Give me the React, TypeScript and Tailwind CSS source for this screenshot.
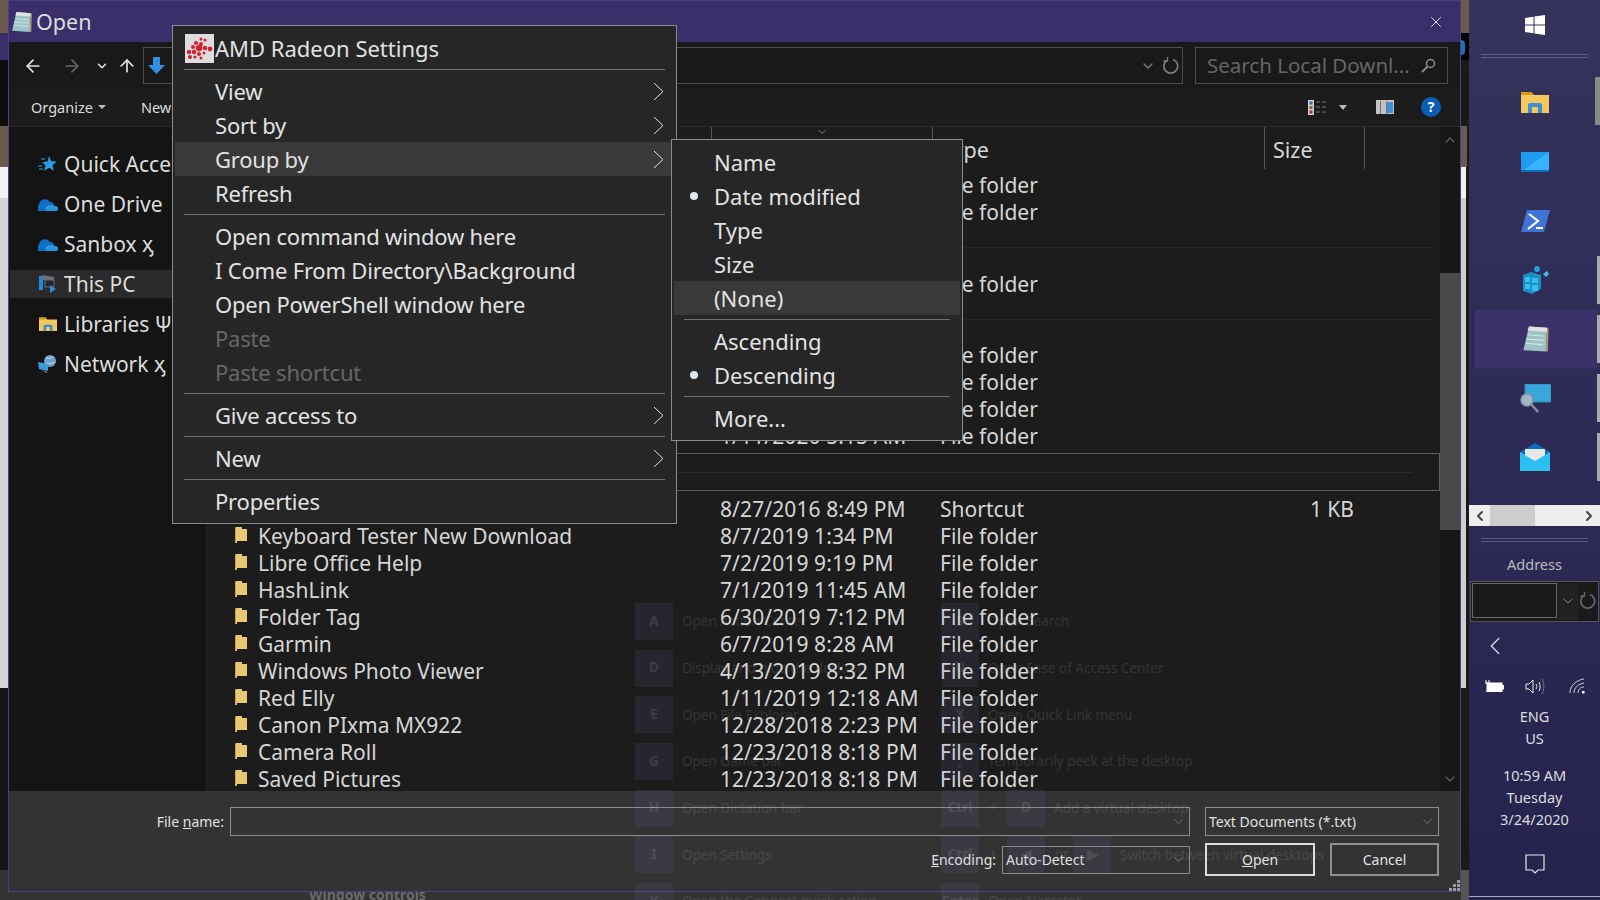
import { ArrowLeft, ArrowRight, ArrowUp, ChevronDown, ChevronLeft, ChevronRight, ChevronUp, X } from "lucide-react";

const FONT = "font-['Noto_Sans','Open_Sans',sans-serif]";

// --- small drawings ---

function AmdIcon() {
  const dots = [[16, 5, 1.5], [20, 6, 1.5], [11, 9, 2], [16, 10, 2], [8, 13, 2], [14, 14, 3.2], [20, 14, 2.2], [25, 15, 2.4], [4, 18, 2.2], [9, 18, 2.2], [14, 20, 2], [19, 19, 1.5], [5, 23, 2], [10, 23, 1.6], [16, 24, 1.6]];
  return (
    <svg width="29" height="29" viewBox="0 0 29 29" className="shrink-0">
      <rect width="29" height="29" fill="#dddddd" />
      {dots.map(([x, y, r], i) => (
        <circle key={i} cx={x} cy={y} r={r} fill="#d8202c" />
      ))}
    </svg>
  );
}

function NotepadIcon({ size = 20 }: { size?: number }) {
  return (
    <svg width={size} height={size} viewBox="0 0 20 20">
      <path d="M5 1l13 1-1 17-16-1z" fill="#9cc3c6" />
      <path d="M5 1l13 1-.4 3L4 4z" fill="#e2e2e2" />
      <path d="M18 2l1 .5-.6 16.500-1.400 0z" fill="#b89b6a" />
      <path d="M4 7l12 1M3 10l13 1M3 13l12 1" stroke="#d7e8e8" strokeWidth=".8" />
    </svg>
  );
}

function ChevronMenu() {
  return (
    <svg width="11" height="19" viewBox="0 0 11 19" fill="none" stroke="#dde6f0" strokeWidth="1">
      <path d="M1 1l9 8.500-9 8.500" />
    </svg>
  );
}

function RefreshGlyph({ size = 18 }: { size?: number }) {
  return (
    <svg width={size} height={size} viewBox="0 0 18 18" fill="none" stroke="currentColor" strokeWidth="1.800">
      <path d="M11 2.500A7 7 0 1 1 5 3.200" />
      <path d="M5.500 0v4H1.500" strokeWidth="1.300" />
    </svg>
  );
}

function StarIcon() {
  return (
    <svg width="19" height="18" viewBox="0 0 19 18">
      <path d="M11 1l2.200 5.200 5.600.4-4.300 3.600 1.400 5.500L11 12.800l-4.800 2.900 1.400-5.500-3.600-3 5.600-.6z" fill="#2b9de8" />
      <path d="M0 11h4M1 14h4M3 4h4" stroke="#2b9de8" strokeWidth="1" />
    </svg>
  );
}

function CloudIcon() {
  return (
    <svg width="20" height="13" viewBox="0 0 20 13">
      <path d="M1 13a3 3 0 0 1 0-6 6 6 0 0 1 11-3 4 4 0 0 1 4 4 3 3 0 0 1 3 5z" fill="#0f6fc6" />
      <path d="M8 13a3 3 0 0 1 2-5 4 4 0 0 1 6 0 3 3 0 0 1 3 5z" fill="#2a95dd" />
    </svg>
  );
}

function PcIcon() {
  return (
    <svg width="19" height="18" viewBox="0 0 19 18">
      <path d="M1 1h4v14H1z" fill="#1b8ae0" />
      <path d="M4 0l12 2v3H4z" fill="#6a6f78" />
      <path d="M7 5h9v7H7z" fill="#22262c" stroke="#6a6f78" />
      <path d="M12 10l6 4-6 4z" fill="#2b8be0" />
    </svg>
  );
}

function FolderColor({ w = 18, h = 16 }: { w?: number; h?: number }) {
  return (
    <svg width={w} height={h} viewBox="0 0 28 24">
      <path d="M0 2h10l3 3h15v18H0z" fill="#f4c95c" />
      <path d="M0 2h10l3 3H0z" fill="#d79a1c" />
      <path d="M7 23v-8a2 2 0 0 1 2-2h10a2 2 0 0 1 2 2v8h-4v-6h-6v6z" fill="#3c8fd6" />
      <path d="M11 17h6v4h-6z" fill="#f4c95c" />
    </svg>
  );
}

function NetworkIcon() {
  return (
    <svg width="19" height="18" viewBox="0 0 19 18">
      <circle cx="12" cy="6" r="6" fill="#6d9fc9" />
      <path d="M8 3c3 1 5 0 7-1M7 8c3 1 6 1 10-1" stroke="#c7dbe9" strokeWidth="1" fill="none" />
      <path d="M0 7l10 2v7L1 14z" fill="#3a9bdc" />
      <path d="M3 15l6 3v-1z" fill="#b8c4cc" />
    </svg>
  );
}

function ListFolder() {
  return (
    <svg width="12" height="16" viewBox="0 0 12 16" className="shrink-0 mt-[-4px]">
      <path d="M1 0h6v2h5v12H2v2H0V1z" fill="#e9c873" />
      <path d="M0 1h1v15H0z" fill="#c9a24c" />
    </svg>
  );
}

function WinLogo() {
  return (
    <svg width="20" height="20" viewBox="0 0 20 20">
      <path d="M0 3l8.500-1.200v7.600H0zM9.500 1.600L20 0v9.400H9.500zM0 10.500h8.500v7.700L0 17zM9.500 10.500H20V20L9.500 18.400z" fill="#fff" />
    </svg>
  );
}

function DesktopIcon() {
  return (
    <svg width="28" height="20" viewBox="0 0 28 20">
      <rect width="28" height="20" fill="#1f9cf0" />
      <path d="M0 20L28 0v20z" fill="#39b3ff" />
      <rect y="18" width="28" height="2" fill="#0a6fb8" />
    </svg>
  );
}

function PsIcon() {
  return (
    <svg width="29" height="22" viewBox="0 0 29 22">
      <path d="M6 0h23l-6 22H0z" fill="#3f74d6" />
      <path d="M8 4l9 7-10 8" stroke="#fff" strokeWidth="2.200" fill="none" />
      <path d="M15 18h7" stroke="#fff" strokeWidth="2" />
    </svg>
  );
}

function RegistryIcon() {
  return (
    <svg width="27" height="28" viewBox="0 0 27 28">
      <path d="M1 9l8-3 10 3v14l-9 5-9-3z" fill="#1c8fc6" />
      <path d="M3 11h5v5H3zM10 12h6v5h-6zM3 18h5v5H3zM10 19h6v6h-6z" fill="#36c2ee" />
      <circle cx="15" cy="3" r="3" fill="#1fa0d8" />
      <path d="M21 8l4-3 2 3-3 3z" fill="#3bc0ee" />
    </svg>
  );
}

function MagnifierIcon() {
  return (
    <svg width="31" height="29" viewBox="0 0 31 29">
      <rect x="5" y="0" width="26" height="18" fill="#3ba6dc" stroke="#2c86b8" />
      <circle cx="7" cy="16" r="6" fill="#9fb6cc" stroke="#8895a3" strokeWidth="1.500" />
      <path d="M11 20l7 8" stroke="#8a8f95" strokeWidth="2.500" />
    </svg>
  );
}

function MailIcon() {
  return (
    <svg width="30" height="28" viewBox="0 0 30 28">
      <path d="M0 9L15 0l15 9v19H0z" fill="#0f6cbd" />
      <path d="M5 6h20v10l-10 5-10-5z" fill="#e8e8e8" />
      <path d="M0 9l15 9 15-9v19H0z" fill="#2cc0f2" />
    </svg>
  );
}

function ViewIcon() {
  return (
    <svg width="19" height="15" viewBox="0 0 19 15">
      <rect width="6" height="15" fill="#cfcfcf" />
      <rect x="1.500" y="1.500" width="3" height="3" fill="#2a6fb0" />
      <rect x="1.500" y="6" width="3" height="3" fill="#8a6a3a" />
      <rect x="1.500" y="10.500" width="3" height="3" fill="#b02a2a" />
      <path d="M8 2h4M14 2h4M8 7h4M14 7h4M8 12h4M14 12h4" stroke="#777" />
    </svg>
  );
}

function PaneIcon() {
  return (
    <svg width="18" height="14" viewBox="0 0 18 14">
      <rect width="18" height="14" fill="#c4c4c4" />
      <rect x="11" y="2" width="6" height="11" fill="#3f8fd6" />
      <rect x="4" y="1" width="1" height="13" fill="#777" />
      <rect x="10" y="1" width="1" height="13" fill="#777" />
    </svg>
  );
}

function Grip() {
  return (
    <svg width="11" height="11" viewBox="0 0 11 11">
      <path d="M8 0h3v3H8zM4 4h3v3H4zM8 4h3v3H8zM0 8h3v3H0zM4 8h3v3H4zM8 8h3v3H8z" fill="#9a9a9a" />
    </svg>
  );
}

// --- context menus ---

function MenuSep() {
  return <div className="h-px bg-[#6f6f6f] mx-[9px] my-[4px]" />;
}

function MenuRow({ label, arrow, active, disabled }: { label: string; arrow?: boolean; active?: boolean; disabled?: boolean }) {
  return (
    <div className={`h-[34px] flex items-center pl-[40px] pr-[10px] justify-between text-[22px] tracking-[-0.2px] leading-none ${active ? "bg-[#393939]" : ""} ${disabled ? "text-[#666666]" : "text-[#e2e2e2]"}`}>
      <span>{label}</span>
      {arrow && <ChevronMenu />}
    </div>
  );
}

function SubRow({ label, bullet, active }: { label: string; bullet?: boolean; active?: boolean }) {
  return (
    <div className={`h-[34px] flex items-center text-[22px] leading-none text-[#e2e2e2] ${active ? "bg-[#393939]" : ""}`}>
      <div className="w-[40px] flex justify-end pr-[16px]">
        {bullet && <div className="w-2 h-2 rounded-full bg-[#dde8f2]" />}
      </div>
      <span>{label}</span>
    </div>
  );
}

function ContextMenu() {
  return (
    <div className="absolute z-20 left-[172px] top-[25px] w-[505px] h-[499px] bg-[#262626] border border-[#8c8c8c] px-[2px] pt-[7px]">
      <div className="h-[30px] flex items-center gap-px pl-[10px] text-[22px] leading-none text-[#e2e2e2]">
        <AmdIcon />
        <span>AMD Radeon Settings</span>
      </div>
      <div className="h-px bg-[#6f6f6f] mx-[9px] mt-[6px] mb-[4px]" />
      <MenuRow label="View" arrow />
      <MenuRow label="Sort by" arrow />
      <MenuRow label="Group by" arrow active />
      <MenuRow label="Refresh" />
      <MenuSep />
      <MenuRow label="Open command window here" />
      <MenuRow label="I Come From Directory\Background" />
      <MenuRow label="Open PowerShell window here" />
      <MenuRow label="Paste" disabled />
      <MenuRow label="Paste shortcut" disabled />
      <MenuSep />
      <MenuRow label="Give access to" arrow />
      <MenuSep />
      <MenuRow label="New" arrow />
      <MenuSep />
      <MenuRow label="Properties" />
    </div>
  );
}

function GroupSubmenu() {
  return (
    <div className="absolute z-30 left-[671px] top-[139px] w-[292px] h-[302px] bg-[#262626] border border-[#8c8c8c] px-[2px] pt-[5px]">
      <SubRow label="Name" />
      <SubRow label="Date modified" bullet />
      <SubRow label="Type" />
      <SubRow label="Size" />
      <SubRow label="(None)" active />
      <div className="h-px bg-[#6f6f6f] mx-[10px] my-[4px]" />
      <SubRow label="Ascending" />
      <SubRow label="Descending" bullet />
      <div className="h-px bg-[#6f6f6f] mx-[10px] my-[4px]" />
      <SubRow label="More..." />
    </div>
  );
}

// --- file dialog ---

const NAV = [
  { icon: <StarIcon />, label: "Quick Access" },
  { icon: <CloudIcon />, label: "One Drive" },
  { icon: <CloudIcon />, label: "Sanbox ӽ" },
  { icon: <PcIcon />, label: "This PC", active: true },
  { icon: <FolderColor />, label: "Libraries Ψ" },
  { icon: <NetworkIcon />, label: "Network ӽ" },
];

const FILES = [
  ["Keyboard Tester New Download", "8/7/2019 1:34 PM"],
  ["Libre Office Help", "7/2/2019 9:19 PM"],
  ["HashLink", "7/1/2019 11:45 AM"],
  ["Folder Tag", "6/30/2019 7:12 PM"],
  ["Garmin", "6/7/2019 8:28 AM"],
  ["Windows Photo Viewer", "4/13/2019 8:32 PM"],
  ["Red Elly", "1/11/2019 12:18 AM"],
  ["Canon PIxma MX922", "12/28/2018 2:23 PM"],
  ["Camera Roll", "12/23/2018 8:18 PM"],
  ["Saved Pictures", "12/23/2018 8:18 PM"],
];

function FileRow({ name, date, type = "File folder", size }: { name?: string; date?: string; type?: string; size?: string }) {
  return (
    <div className="h-[27px] grid grid-cols-[513px_220px_324px_90px] items-center text-[21px] leading-none text-[#d6d6d6] whitespace-nowrap">
      <div className="flex items-center gap-[11px] pl-[28px]">
        {name && <ListFolder />}
        <span>{name}</span>
      </div>
      <div className="tracking-[0.1px]">{date}</div>
      <div>{type}</div>
      <div className="text-right">{size}</div>
    </div>
  );
}

function FileDialog() {
  return (
    <div className="absolute left-[8px] top-0 w-[1453px] h-[892px] flex flex-col border-x border-b border-[#4a3f88] z-10">
      {/* title bar */}
      <div className="h-[42px] shrink-0 bg-[#3a2f6b] border-t border-[#4b4080] flex items-center pl-[2px] pr-[15px] gap-[3px] text-[21.500px] leading-none text-[#dcdcdc]">
        <NotepadIcon size={22} />
        <span>Open</span>
        <X size={18} strokeWidth={1.200} className="ml-auto text-[#e8e8e8]" />
      </div>

      {/* address row */}
      <div className="h-[46px] shrink-0 bg-[#191919] flex items-center pt-px">
        <div className="w-[134px] pl-[14px] flex items-center text-[#e6e6e6]">
          <ArrowLeft size={20} strokeWidth={2} />
          <ArrowRight size={20} strokeWidth={2} className="ml-[19px] text-[#666666]" />
          <ChevronDown size={14} strokeWidth={2.500} className="ml-[13px]" />
          <ArrowUp size={20} strokeWidth={2} className="ml-[8px]" />
        </div>
        <div className="w-[1040px] h-[37px] border border-[#4d4d4d] flex items-center justify-between pl-[4px] pr-[2px]">
          <svg width="17" height="17" viewBox="0 0 17 17">
            <path d="M5 0h7v8h5l-8.500 9L0 8h5z" fill="#2f8fe0" />
          </svg>
          <div className="flex items-center gap-[6px] text-[#7a7a7a]">
            <ChevronDown size={16} strokeWidth={2} />
            <RefreshGlyph />
          </div>
        </div>
        <div className="ml-[12px] w-[253px] h-[37px] border border-[#4d4d4d] flex items-center justify-between pl-[11px] pr-[11px] text-[20.500px] leading-none text-[#666666]">
          <span>Search Local Downl...</span>
          <svg width="15" height="15" viewBox="0 0 15 15" fill="none" stroke="#8a8a8a" strokeWidth="1.500">
            <circle cx="9.500" cy="5.500" r="4" />
            <path d="M6.500 8.500L1 14" strokeWidth="2" />
          </svg>
        </div>
      </div>

      {/* toolbar */}
      <div className="h-[39px] shrink-0 bg-[#1c1c1c] border-b border-[#2b2b2b] flex items-center pl-[22px] pr-[19px] text-[14.500px] leading-none text-[#dddddd]">
        <span>Organize</span>
        <span className="ml-[5px] border-x-[4px] border-x-transparent border-t-[4px] border-t-[#bbbbbb]" />
        <span className="ml-[35px]">New folder</span>
        <div className="ml-auto flex items-center">
          <ViewIcon />
          <span className="ml-[12px] border-x-[4px] border-x-transparent border-t-[5px] border-t-[#bbbbbb]" />
          <div className="ml-[29px]"><PaneIcon /></div>
          <div className="ml-[27px] w-5 h-5 rounded-full bg-[#0a5cb4] flex items-center justify-center text-[14px] font-bold text-white">?</div>
        </div>
      </div>

      {/* body */}
      <div className="flex-1 min-h-0 flex">
        <div className="w-[198px] shrink-0 bg-[#141414] border-r border-[#242424] pt-[17px] pl-px">
          {NAV.map((n) => (
            <div key={n.label} className="h-[40px] flex items-center">
              <div className={`w-full h-[28px] flex items-center whitespace-nowrap text-[21px] leading-none text-[#dcdcdc] ${n.active ? "bg-[#2a2a2a]" : ""}`}>
                <div className="w-[30px] ml-[18px] flex justify-center shrink-0 pl-[9px]">{n.icon}</div>
                <span className="ml-[6px]">{n.label}</span>
              </div>
            </div>
          ))}
        </div>

        <div className="flex-1 min-w-0 bg-[#1c1c1c] overflow-hidden">
          <div className="h-[42px] grid grid-cols-[504px_221px_332px_100px_1fr] text-[21.500px] leading-none text-[#d6d6d6]">
            <div />
            <div className="border-l border-[#555555] relative">
              <ChevronDown size={12} className="absolute left-[104px] top-[-1px] text-[#888888]" />
            </div>
            <div className="border-l border-[#555555] pl-[8px] pt-[12px]">Type</div>
            <div className="border-l border-[#555555] pl-[8px] pt-[12px]">Size</div>
            <div className="border-l border-[#555555]" />
          </div>
          <div className="pt-[3px]">
            <FileRow />
            <FileRow />
            <div className="h-px bg-[#262626] mt-[21px] mb-[23px] mr-[8px]" />
            <FileRow />
            <div className="h-px bg-[#262626] mt-[21px] mb-[22px] mr-[8px]" />
            <FileRow />
            <FileRow />
            <FileRow />
            <FileRow date="1/11/2020 5:15 AM" />
            <div className="h-[38px] mt-[3px] mb-[5px] border border-[#5c5c5c] flex items-center">
              <div className="h-px bg-[#2a2a2a] w-full mr-[26px]" />
            </div>
            <FileRow date="8/27/2016 8:49 PM" type="Shortcut" size="1 KB" />
            {FILES.map(([name, date]) => (
              <FileRow key={name} name={name} date={date} />
            ))}
          </div>
        </div>

        <div className="w-[20px] shrink-0 bg-[#171717] flex flex-col items-center text-[#5f5f5f] pt-[5px] relative">
          <ChevronUp size={16} strokeWidth={2} />
          <div className="w-full h-[257px] bg-[#4a4a4a] mt-[125px] mb-auto" />
          <ChevronDown size={16} strokeWidth={2} className="mb-[4px]" />
        </div>
      </div>

      {/* footer */}
      <div className="h-[100px] shrink-0 bg-[#333333] pt-[16px] pr-[21px] text-[14px] leading-none text-[#e2e2e2] relative">
        <div className="flex items-center h-[29px]">
          <div className="w-[215px] text-right">File <u>n</u>ame:</div>
          <div className="ml-[6px] flex-1 h-full border border-[#8c8c8c] flex items-center justify-end pr-[3px] text-[#999999]">
            <ChevronDown size={15} strokeWidth={1} />
          </div>
          <div className="ml-[15px] w-[234px] h-full border border-[#8c8c8c] flex items-center justify-between pl-[3px] pr-[3px]">
            <span>Text Documents (*.txt)</span>
            <ChevronDown size={15} strokeWidth={1} className="text-[#999999]" />
          </div>
        </div>
        <div className="flex items-center justify-end mt-[7px] h-[33px]">
          <span><u>E</u>ncoding:</span>
          <div className="ml-[6px] w-[188px] h-[28px] border border-[#8c8c8c] flex items-center justify-between pl-[3px] pr-[3px]">
            <span>Auto-Detect</span>
            <ChevronDown size={15} strokeWidth={1} className="text-[#999999]" />
          </div>
          <div className="ml-[15px] w-[110px] h-full border-2 border-[#dcdcdc] flex items-center justify-center"><span><u>O</u>pen</span></div>
          <div className="ml-[15px] w-[109px] h-full border-2 border-[#8f8f8f] flex items-center justify-center">Cancel</div>
        </div>
        <div className="absolute right-0 bottom-0"><Grip /></div>
      </div>
    </div>
  );
}

// --- faint page showing through the dialog ---

const GHOST = [
  [["A"], "Open Action Center", ["S"], "Open Search"],
  [["D"], "Display and hide the desktop", ["U"], "Open Ease of Access Center"],
  [["E"], "Open File Explorer", ["X"], "Open Quick Link menu"],
  [["G"], "Open Game bar", [","], "Temporarily peek at the desktop"],
  [["H"], "Open Dictation bar", ["Ctrl", "+", "D"], "Add a virtual desktop"],
  [["I"], "Open Settings", ["Ctrl", "+", "◀", "or", "▶"], "Switch between virtual desktops"],
  [["K"], "Open the Connect quick action", ["Enter"], "Open Narrator"],
] as const;

function GhostKeys({ keys }: { keys: readonly string[] }) {
  return (
    <div className="flex items-center gap-[10px] shrink-0">
      {keys.map((k, i) =>
        k === "+" || k === "or" ? (
          <span key={i} className="w-[8px] text-center">{k}</span>
        ) : (
          <div key={i} className="w-[38px] h-[37px] bg-[#8a80d0]/10 flex items-center justify-center font-bold">{k}</div>
        ),
      )}
    </div>
  );
}

function GhostPage() {
  return (
    <div className="absolute z-[15] left-[635px] top-[603px] w-[700px] grid grid-cols-[306px_1fr] gap-y-[9.670px] text-[13.500px] leading-none text-white/10 whitespace-nowrap pointer-events-none">
      {GHOST.map(([k1, t1, k2, t2]) => (
        <div key={t1} className="contents">
          <div className="flex items-center gap-[9px]">
            <GhostKeys keys={k1} />
            <span className="pt-px">{t1}</span>
          </div>
          <div className="flex items-center gap-[9px]">
            <GhostKeys keys={k2} />
            <span className="pt-px">{t2}</span>
          </div>
        </div>
      ))}
    </div>
  );
}

// --- side taskbar ---

function DoubleLine() {
  return (
    <div className="mx-[12px] h-[4px] border-y border-[#5b5985]" />
  );
}

function TaskIcon({ children, active, tab }: { children: React.ReactNode; active?: boolean; tab?: string }) {
  return (
    <div className="h-[58px] flex items-center relative mb-px">
      <div className="w-full h-full pr-[3px] pl-[4px]">
        <div className={`h-full flex items-center justify-center ${active ? "bg-[#3a3268] border-l border-[#25224a]" : ""}`}>{children}</div>
      </div>
      {tab && <div className={`absolute right-0 top-[5px] bottom-[5px] ${tab}`} />}
    </div>
  );
}

function Taskbar() {
  return (
    <div className="w-[131px] h-[900px] shrink-0 bg-gradient-to-b from-[#35335c] to-[#25234e] flex flex-col text-[14.500px] leading-none text-[#dddddd] relative z-10">
      <div className="h-[54px] flex items-center justify-center pb-[5px]"><WinLogo /></div>
      <DoubleLine />
      <div className="pt-[16px] relative">
        <div className="absolute right-0 top-[19px] w-[5px] h-[48px] bg-[#8a8a8a]" />
        <TaskIcon><div className="mb-[3px]"><FolderColor w={28} h={24} /></div></TaskIcon>
        <TaskIcon><DesktopIcon /></TaskIcon>
        <TaskIcon><PsIcon /></TaskIcon>
        <TaskIcon tab="w-[3px] bg-[#aaaaaa]"><RegistryIcon /></TaskIcon>
        <TaskIcon active tab="w-[3px] bg-[#aaaaaa]"><NotepadIcon size={28} /></TaskIcon>
        <TaskIcon tab="w-[3px] bg-[#aaaaaa]"><MagnifierIcon /></TaskIcon>
        <TaskIcon tab="w-[3px] bg-[#aaaaaa]"><MailIcon /></TaskIcon>
      </div>

      <div className="h-[21px] mt-[18px] bg-[#eeeeee] flex items-center justify-between px-[3px] text-[#444444] relative">
        <ChevronLeft size={16} strokeWidth={3} />
        <div className="absolute left-[21px] w-[45px] h-[21px] bg-[#cdcdcd]" />
        <ChevronRight size={16} strokeWidth={3} />
      </div>
      <div className="mt-[12px]"><DoubleLine /></div>
      <div className="mt-[15px] text-center text-[#bbbbbb]">Address</div>
      <div className="mt-[9px] mx-px h-[41px] bg-[#1a1a1a] border border-[#555555] flex items-start p-px">
        <div className="w-[85px] h-[35px] border border-[#666666]" />
        <div className="w-[21px] h-[37px] bg-[#222222] flex items-center justify-center text-[#999999]">
          <ChevronDown size={16} strokeWidth={1.200} />
        </div>
        <div className="flex-1 h-[37px] flex items-center justify-center text-[#666666]">
          <RefreshGlyph />
        </div>
      </div>

      <div className="mt-[9px] pl-[11px] text-[#dddddd]"><ChevronLeft size={30} strokeWidth={1} /></div>
      <div className="mt-[17px] flex items-center justify-between pl-[15px] pr-[14px]">
        <svg width="20" height="13" viewBox="0 0 20 13" fill="none" stroke="#ffffff">
          <path d="M2 0v3M5 0v3M1 3h5v2.500H4.500V11H2" />
          <rect x="3" y="3" width="15" height="8.500" fill="#ffffff" />
          <rect x="18.500" y="5.500" width="1" height="3.500" />
        </svg>
        <svg className="mr-[4px]" width="20" height="17" viewBox="0 0 20 17" fill="none" stroke="#e8e8e8">
          <path d="M1 6h3l4-4v13l-4-4H1z" />
          <path d="M11 6c1 1.500 1 3.500 0 5M14 4c1.500 3 1.500 6 0 9" />
          <path d="M17 1c2.500 5 2.500 10 0 15" stroke="#77759a" />
        </svg>
        <svg width="17" height="16" viewBox="0 0 17 16" fill="none" stroke="#cfcfcf">
          <path d="M1 15C1 8 7 2 15 1M5 15c0-5 4-9 10-10M9 15c0-3 2-6 6-6" />
          <rect x="13" y="13" width="2.500" height="2.500" fill="#fff" stroke="none" />
        </svg>
      </div>
      <div className="mt-[11px] h-[22px] flex items-center justify-center">ENG</div>
      <div className="h-[22px] flex items-center justify-center">US</div>
      <div className="mt-[15px] h-[22px] flex items-center justify-center">10:59 AM</div>
      <div className="h-[22px] flex items-center justify-center">Tuesday</div>
      <div className="h-[22px] flex items-center justify-center">3/24/2020</div>
      <div className="mt-[23px] flex justify-center">
        <svg width="20" height="20" viewBox="0 0 20 20" fill="none" stroke="#e8e8e8" strokeWidth="1.200">
          <path d="M1 1h18v15h-6l-3 3-3-3H1z" />
        </svg>
      </div>
      <div className="mt-[22px] h-px bg-[#a8a8c0]" />
    </div>
  );
}

// strips of whatever is behind the dialog, seen at its edges
function LeftStrip() {
  return (
    <div className="flex flex-col h-full w-[8px]">
      <div className="h-[33px] bg-[#6b5b4f]" />
      <div className="h-[27px] bg-[#3a2f6b]" />
      <div className="h-[66px] bg-[#0d0d0d]" />
      <div className="h-[41px] bg-[#6b5b4f]" />
      <div className="h-[31px] bg-[#f2f2f2]" />
      <div className="h-[490px] bg-[#d6d6d6]" />
      <div className="h-[182px] bg-[#141414]" />
      <div className="flex-1 bg-[#333333]" />
    </div>
  );
}

function RightStrip() {
  return (
    <div className="flex flex-col h-full w-[8px] bg-[#1a1a1a]">
      <div className="h-[33px] bg-[#6b5b4f]" />
      <div className="h-[27px] bg-[#000000] pt-[7px]">
        <div className="w-[4px] h-[15px] bg-[#1a6fc0] rounded-r-full" />
      </div>
      <div className="h-[66px] bg-[#1a1a1a]" />
      <div className="h-[41px] w-[6px] bg-[#6b5b4f]" />
      <div className="h-[31px] w-[5px] bg-[#f2f2f2]" />
      <div className="h-[490px] w-[5px] bg-[#cfcfcf]" />
      <div className="h-[182px]" />
      <div className="flex-1 bg-[#555555]" />
    </div>
  );
}

export default function App() {
  return (
    <div className={`relative w-[1600px] h-[900px] overflow-hidden flex bg-[#333333] ${FONT}`}>
      <div className="flex-1 relative overflow-hidden">
        <div className="absolute inset-0 flex justify-between">
          <LeftStrip />
          <RightStrip />
        </div>
        <div className="absolute left-[309px] top-[888px] text-[14px] leading-none font-bold text-[#6a6a6a]">Window controls</div>
        <FileDialog />
        <GhostPage />
        <ContextMenu />
        <GroupSubmenu />
      </div>
      <Taskbar />
    </div>
  );
}
